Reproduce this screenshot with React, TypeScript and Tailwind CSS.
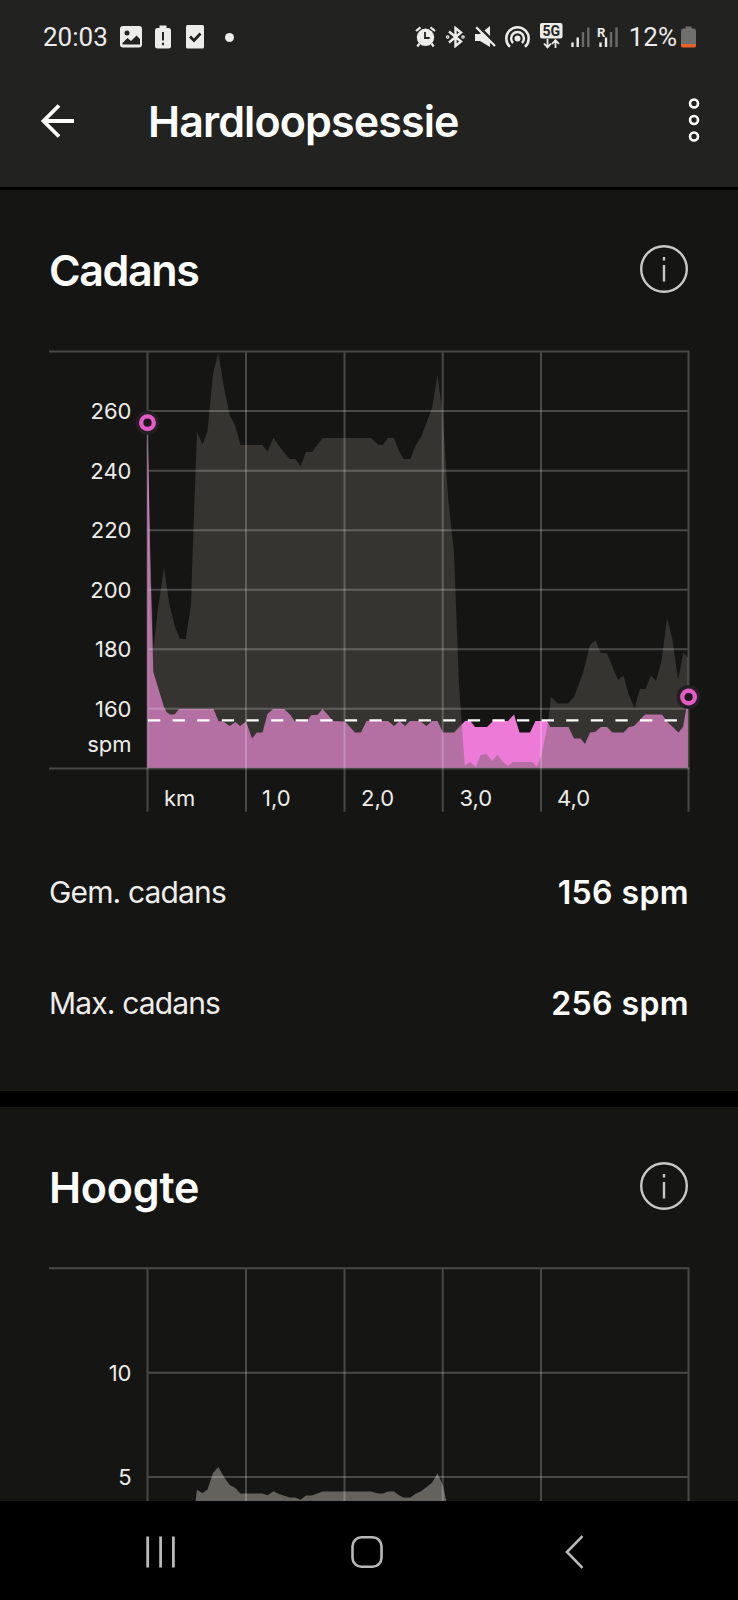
import type { ReactNode } from 'react';

type Point = [number, number];

const GRID_X = [147.5, 246, 344.5, 442.7, 541, 688.5];
const LINE = 'rgba(255,255,255,0.22)';

// Route elevation, shared by both charts as the backdrop
const ELEVATION: Point[] = [
  [148, 490], [153.5, 648], [158, 608], [164, 568], [169.5, 605], [175, 627], [180, 639], [185.7, 639],
  [191, 605], [192, 570], [197, 432], [202.5, 444.5], [207.5, 431.5], [213, 374], [218.3, 353],
  [224.5, 390], [230, 416], [235, 425], [240.5, 445], [262.5, 445], [267.5, 451.5], [273.5, 437.5],
  [278.5, 445.5], [289.5, 459], [295.5, 459], [300.5, 466.5], [306, 452], [312, 452], [322.5, 438],
  [371, 438], [378, 444.7], [383, 444.7], [388, 438], [394, 438], [399, 451], [403.5, 459],
  [410.5, 459], [415.5, 445.5], [421.5, 436], [432, 408], [437.5, 375], [443, 417], [448, 497],
  [454, 553], [459, 685], [461.5, 720], [464.7, 765.5], [470, 762], [476, 767], [480.5, 755],
  [486.5, 754], [492, 761], [497.5, 755], [503, 762], [508, 766], [513, 762], [532, 762],
  [537, 766.5], [541, 757], [548, 723], [551, 697], [558, 703.5], [568, 703.5], [574, 697],
  [583, 673], [590, 645], [595.5, 640], [600.5, 652.5], [607, 653.5], [618, 680], [623.5, 675.5],
  [628.5, 694], [634.5, 708], [640, 689], [645.5, 689], [651, 675.5], [656, 681], [661.5, 661],
  [667, 618], [672.5, 640], [678, 680], [683.5, 652.5], [688, 658],
];

const CADENCE: Point[] = [
  [147.5, 422], [150.7, 580], [153.3, 672], [164, 707], [166.5, 712], [170, 714.5], [174.5, 714.5],
  [179, 709], [213.5, 709], [218.5, 721], [224, 722], [229.7, 726], [235.5, 722], [240, 726],
  [246, 721.5], [252, 738.5], [257, 732.5], [262.5, 732.5], [267.5, 714], [273, 709], [284, 709],
  [290, 714.5], [295, 721.5], [307, 721], [311.5, 715], [317.5, 715], [322.5, 709], [328, 715],
  [333, 721], [345, 721.5], [355, 732.5], [361, 732.5], [366.5, 721], [388, 721], [394, 726],
  [399.5, 721], [405, 726], [410, 721], [420, 721], [426.5, 726], [432, 721], [437.5, 721],
  [443, 732.5], [454, 732.5], [465, 721], [470, 720.5], [475, 727], [487, 727], [493, 721],
  [508, 721], [514, 714.5], [519.5, 732.5], [530, 732.5], [535.5, 721], [547, 721], [550.5, 727],
  [568.5, 727], [574, 738.5], [580.5, 738.5], [585, 744], [590, 732.5], [595, 732], [601, 727],
  [607, 727], [612.5, 732.5], [623.5, 732.5], [629, 727], [634, 726], [645, 714.5], [662, 714.5],
  [667.5, 722], [678.5, 732.5], [683, 727], [687.8, 700],
];

function area(points: Point[], base: number) {
  const first = points[0];
  const last = points[points.length - 1];
  return `M${first[0]} ${base} L${points.map((p) => p.join(' ')).join(' L')} L${last[0]} ${base} Z`;
}

export default function App() {
  return (
    <div className="flex h-[1600px] w-[738px] flex-col overflow-hidden bg-[#151513] font-['Inter',sans-serif] text-white">
      <header className="h-[190px] shrink-0 border-b-[3px] border-black bg-[#222220]">
        <StatusBar />
        <div className="flex h-[98px] items-center pr-[38px] pl-10">
          <svg width="36" height="36" viewBox="0 0 36 36" fill="none" stroke="#fff" strokeWidth="3.8">
            <path d="M34 18H3M19 2.5L3.5 18L19 33.5" />
          </svg>
          <h1 className="ml-[72px] text-[43px] font-semibold tracking-[-0.9px]">Hardloopsessie</h1>
          <svg className="-mt-0.5 ml-auto" width="12" height="46" viewBox="0 0 12 46" fill="none" stroke="#fff" strokeWidth="2.6">
            <circle cx="6" cy="6.5" r="4" />
            <circle cx="6" cy="23" r="4" />
            <circle cx="6" cy="39.5" r="4" />
          </svg>
        </div>
      </header>

      <section className="h-[917px] shrink-0 border-b-[16px] border-black pt-14">
        <SectionTitle className="tracking-[-1.4px]">Cadans</SectionTitle>
        <CadenceChart />
        <StatRow label="Gem. cadans" value="156 spm" className="mt-[42px]" />
        <StatRow label="Max. cadans" value="256 spm" className="mt-[51px]" />
      </section>

      <section className="h-[394px] shrink-0 pt-14">
        <SectionTitle className="tracking-[-0.2px]">Hoogte</SectionTitle>
        <ElevationChart />
      </section>

      <NavBar />
    </div>
  );
}

function SectionTitle({ children, className }: { children: ReactNode; className: string }) {
  return (
    <div className="flex h-12 items-center justify-between pr-[50px] pl-[49px]">
      <h2 className={`text-[43px] font-semibold ${className}`}>{children}</h2>
      <svg className="-mt-[3px]" width="48" height="48" viewBox="0 0 48 48" fill="none" stroke="#c8c8c5" strokeWidth="2.4">
        <circle cx="24" cy="24" r="22.8" />
        <path d="M24 20V36.5M24 12V15.5" />
      </svg>
    </div>
  );
}

function StatRow({ label, value, className }: { label: string; value: string; className: string }) {
  return (
    <div className={`flex h-[60px] items-center justify-between pr-[49px] pl-[49px] ${className}`}>
      <span className="text-[30px] tracking-[-0.85px] text-[#ededea]">{label}</span>
      <span className="mt-0.5 text-[32px] font-semibold tracking-[0.4px]">{value}</span>
    </div>
  );
}

function VerticalLines({ top, bottom }: { top: number; bottom: number }) {
  return (
    <g stroke={LINE} strokeWidth="2">
      {GRID_X.map((x) => (
        <line key={x} x1={x} x2={x} y1={top} y2={bottom} />
      ))}
    </g>
  );
}

function Marker({ x, y }: { x: number; y: number }) {
  return (
    <g>
      <circle cx={x} cy={y} r="12" fill="#241f22" />
      <circle cx={x} cy={y} r="6.3" fill="#1d171b" stroke="#e45bc8" strokeWidth="4.4" />
    </g>
  );
}

function CadenceChart() {
  const rows = [
    { y: 411, label: '260' },
    { y: 470.7, label: '240' },
    { y: 530.3, label: '220' },
    { y: 589.7, label: '200' },
    { y: 649.2, label: '180' },
    { y: 708.8, label: '160' },
  ];
  const ticks = [
    { x: 164, label: 'km' },
    { x: 262, label: '1,0' },
    { x: 361, label: '2,0' },
    { x: 459.5, label: '3,0' },
    { x: 557, label: '4,0' },
  ];

  return (
    <svg className="mt-[46px] block" width="738" height="480" viewBox="0 340 738 480">
      <path d={area(CADENCE, 767.7)} fill="#ed7ad6" />
      <path d={area(ELEVATION, 767.7)} fill="#64625b" fillOpacity="0.41" />
      <g stroke={LINE} strokeWidth="2">
        <line x1="49" x2="689.5" y1="351.5" y2="351.5" />
        <line x1="49" x2="689.5" y1="768.6" y2="768.6" />
        {rows.map((row) => (
          <line key={row.label} x1="148.5" x2="687.5" y1={row.y} y2={row.y} />
        ))}
      </g>
      <VerticalLines top={352.5} bottom={811.7} />
      <line x1="148" x2="688" y1="720.3" y2="720.3" stroke="#fff" strokeWidth="2.2" strokeDasharray="12.3 12.3" />
      <Marker x={147.5} y={422.7} />
      <Marker x={688.6} y={697} />
      <g fill="#ededea" fontSize="22">
        {rows.map((row) => (
          <text key={row.label} x="131.5" y={row.y + 8} textAnchor="end">
            {row.label}
          </text>
        ))}
        <text x="131.5" y="752" textAnchor="end">spm</text>
        {ticks.map((tick) => (
          <text key={tick.label} x={tick.x} y="806">
            {tick.label}
          </text>
        ))}
      </g>
    </svg>
  );
}

function ElevationChart() {
  // same profile squeezed onto the metre scale
  const points = ELEVATION.map(([x, y]): Point => [x, 1467 + (y - 353) * 0.288]);

  return (
    <svg className="mt-[45px] block" width="738" height="245" viewBox="0 1256 738 245">
      <path d={area(points, 1590)} fill="#64625d" />
      <g stroke={LINE} strokeWidth="2">
        <line x1="49" x2="689.5" y1="1268.3" y2="1268.3" />
        <line x1="148.5" x2="687.5" y1="1372.7" y2="1372.7" />
        <line x1="148.5" x2="687.5" y1="1477" y2="1477" />
      </g>
      <VerticalLines top={1269.3} bottom={1510} />
      <g fill="#ededea" fontSize="22" textAnchor="end">
        <text x="131.5" y="1380.7">10</text>
        <text x="131.5" y="1485">5</text>
      </g>
    </svg>
  );
}

function StatusBar() {
  return (
    <div className="flex h-[72px] items-center pt-0.5 pr-[42px] pl-[42px] font-['Roboto',sans-serif] text-[26px] text-[#ececea]">
      <span className="w-[67px] pl-px">20:03</span>
      <svg className="ml-[11px]" width="22" height="22" viewBox="0 0 22 22">
        <rect width="22" height="21.5" rx="3" fill="#ececea" />
        <circle cx="7" cy="7" r="2.5" fill="#222220" />
        <path d="M2.5 17L7.5 12L11 15L16.5 9.5L20 13V18.5H2.5Z" fill="#222220" />
      </svg>
      <svg className="ml-[13px]" width="16" height="24" viewBox="0 0 16 24">
        <path d="M4.5 0.5H11.5V3H14Q16 3 16 5.5V21Q16 23.5 13.5 23.5H2.5Q0 23.5 0 21V5.5Q0 3 2 3H4.5Z" fill="#ececea" />
        <path d="M8 7V15.5M8 17.7V20.2" stroke="#222220" strokeWidth="2" />
      </svg>
      <svg className="ml-[15px]" width="18" height="24" viewBox="0 0 18 24">
        <rect width="18" height="23.5" rx="1.5" fill="#ececea" />
        <path d="M4 11.5L8 15.5L14.5 8.5" fill="none" stroke="#222220" strokeWidth="2.8" />
      </svg>
      <span className="ml-[21px] h-[9px] w-[9px] rounded-full bg-[#ececea]" />

      <svg className="ml-[181px]" width="21" height="22" viewBox="0 0 21 22">
        <g stroke="#ececea" strokeWidth="2.2" fill="none">
          <path d="M1 5L5.5 1.3M20 5L15.5 1.3M4.5 17.5L2.3 20.5M16.5 17.5L18.7 20.5" />
        </g>
        <circle cx="10.5" cy="11.3" r="8.7" fill="#ececea" />
        <path d="M10 6V12H14.7" fill="none" stroke="#222220" strokeWidth="1.8" />
      </svg>
      <svg className="ml-2.5" width="19" height="22" viewBox="0 0 19 22" fill="none" stroke="#ececea" strokeWidth="2.4">
        <path d="M3 5.5L15 15.5L9.5 20V2L15 6.5L3 16.5" />
        <circle cx="1.7" cy="11" r="0.6" />
        <circle cx="17" cy="11" r="0.6" />
      </svg>
      <svg className="ml-2.5" width="21" height="22" viewBox="0 0 21 22">
        <path d="M0 8H5L15 0V21L5 15H0Z" fill="#ececea" />
        <path d="M3.2 0L22 18.8" stroke="#222220" strokeWidth="2.6" />
        <path d="M1.2 1.2L20 20" stroke="#ececea" strokeWidth="2.3" />
      </svg>
      <svg className="ml-[9px]" width="25" height="22" viewBox="0 0 25 22" fill="none" stroke="#ececea" strokeWidth="2.5">
        <path d="M5 20.8A11.2 11.2 0 1 1 20 20.8" />
        <path d="M8 17A6.4 6.4 0 1 1 17 17" />
        <circle cx="12.5" cy="12.5" r="3" fill="#ececea" stroke="none" />
      </svg>
      <svg className="-mt-0.5 ml-2.5" width="23" height="26" viewBox="0 0 23 26">
        <rect width="22.5" height="15.5" rx="2" fill="#ececea" />
        <text x="11.3" y="12.7" textAnchor="middle" fontSize="14" fontWeight="700" fill="#222220">5G</text>
        <path d="M7.5 16V24M4 20.5L7.5 24.3L11 20.5M15.5 25V17.5M12 21L15.5 17.2L19 21" fill="none" stroke="#ececea" strokeWidth="1.8" />
      </svg>
      <svg className="ml-2" width="19" height="22" viewBox="0 0 19 22">
        <path d="M1.5 16.5V21M6.7 11.5V21" stroke="#ececea" strokeWidth="2.4" />
        <path d="M12 6V21M17.3 1.5V21" stroke="#6b6b69" strokeWidth="2.4" />
      </svg>
      <svg className="ml-[7px]" width="21" height="22" viewBox="0 0 21 22">
        <path d="M3.5 16.5V21M9 11.5V21" stroke="#ececea" strokeWidth="2.4" />
        <path d="M14 6V21M19.5 1.5V21" stroke="#6b6b69" strokeWidth="2.4" />
        <text x="0" y="11" fontSize="13" fontWeight="700" fill="#ececea">R</text>
      </svg>
      <span className="ml-auto">12%</span>
      <svg className="ml-1" width="15" height="22" viewBox="0 0 15 22">
        <path d="M4.5 0.5H10.5V2.5H13Q15 2.5 15 5V18H0V5Q0 2.5 2 2.5H4.5Z" fill="#6f6f6d" />
        <path d="M0 18H15V20Q15 21.5 13 21.5H2Q0 21.5 0 20Z" fill="#e8602c" />
      </svg>
    </div>
  );
}

function NavBar() {
  return (
    <nav className="flex h-[99px] shrink-0 items-center bg-black pt-[3px] pl-[146px]">
      <svg width="30" height="32" viewBox="0 0 30 32" stroke="#b9b9b9" strokeWidth="2.8">
        <path d="M1.7 0.5V31.5M14.6 0.5V31.5M27.4 0.5V31.5" />
      </svg>
      <svg className="ml-[175px]" width="32" height="32" viewBox="0 0 32 32" fill="none" stroke="#b9b9b9" strokeWidth="2.6">
        <rect x="1.5" y="1.3" width="29" height="29.4" rx="9" />
      </svg>
      <svg className="ml-[181px]" width="20" height="34" viewBox="0 0 20 34" fill="none" stroke="#b9b9b9" strokeWidth="2.6">
        <path d="M18.5 1.2L3 17L18.5 32.8" />
      </svg>
    </nav>
  );
}
